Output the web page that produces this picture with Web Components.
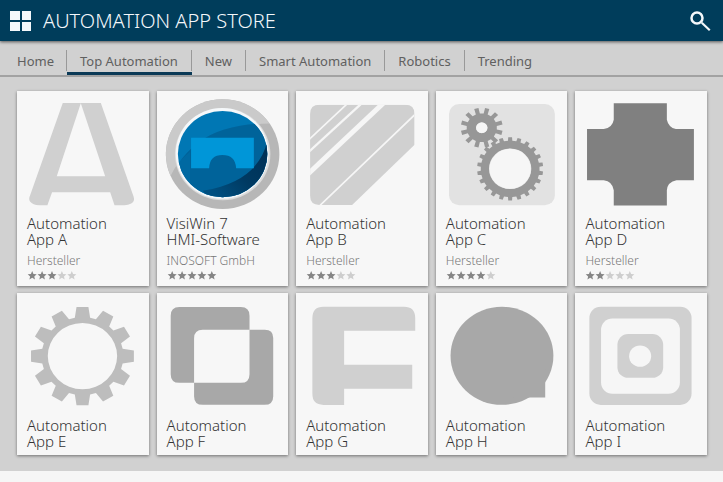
<!DOCTYPE html>
<html lang="en">
<head>
<meta charset="utf-8">
<title>Automation App Store</title>
<style>
  html { background: #f6f6f6; }
  body { margin: 0; font-family: "Noto Sans", "Open Sans", sans-serif; font-weight: 300; color: #333; }
</style>
</head>
<body>
<app-store></app-store>

<script>
/* Outline of a cog: elliptical radii, tapered teeth, and a round hole. */
function gear({ cx, cy, rx, ry, root, hole, teeth, phase = 0, tip, base }) {
  const step = Math.PI * 2 / teeth;
  const pts = [];
  for (let i = 0; i < teeth; i++) {
    const a = (i + phase) * step - Math.PI / 2;
    [[-base, root], [-tip, 1], [tip, 1], [base, root]].forEach(([o, r]) => {
      const t = a + o * step;
      pts.push((cx + Math.cos(t) * rx * r).toFixed(1) + ' ' + (cy + Math.sin(t) * ry * r).toFixed(1));
    });
  }
  const hx = rx * hole, hy = ry * hole;
  return `<path fill-rule="evenodd" d="M${pts.join('L')}Z M${cx - hx} ${cy}a${hx} ${hy} 0 1 0 ${2 * hx} 0a${hx} ${hy} 0 1 0 ${-2 * hx} 0Z"/>`;
}

const ICONS = {
  a: ['51 18', `<path fill="#d0d0d0" d="M188 54H302L400 334Q405 349 393 355Q382 361 369 360H343L330 321H156L142 360H118Q98 360 90 349Q85 342 90 331ZM242 55L170 273H315Z"/>`],
  visiwin: ['21 18', `
    <clipPath id="ring"><ellipse cx="217.500" cy="207" rx="170" ry="164"/></clipPath>
    <clipPath id="disc"><ellipse cx="217.500" cy="207" rx="134" ry="129"/></clipPath>
    <linearGradient id="dark" gradientUnits="userSpaceOnUse" x1="190" y1="320" x2="340" y2="200"><stop offset="0" stop-color="#004f80"/><stop offset="0.500" stop-color="#003a62"/><stop offset="1" stop-color="#003258"/></linearGradient>
    <g clip-path="url(#ring)">
      <rect x="40" y="40" width="360" height="340" fill="#b7b7b7"/>
      <path fill="#cacaca" d="M40 40H400V118Q310 105 200 150Q100 190 62 272L40 300Z"/>
    </g>
    <ellipse cx="217.500" cy="207" rx="143" ry="138" fill="#dcdcdc"/>
    <ellipse cx="216" cy="205" rx="139" ry="136" fill="#f5f8fa"/>
    <g clip-path="url(#disc)">
      <rect x="80" y="70" width="280" height="270" fill="#0077b4"/>
      <path fill="#00639a" d="M80 242Q135 160 220 134Q290 112 352 118V350H80Z"/>
      <path fill="#0074b0" d="M80 236L120 200V320H200Q120 330 80 280Z" opacity=".4"/>
      <path fill="url(#dark)" d="M352 165Q325 290 158 317Q180 350 230 350H370V165Z"/>
    </g>
    <path fill="#0096d8" d="M123 158H311V249H258Q255 210 217 210Q179 210 177 249H123Z"/>`],
  b: ['18 18', `
    <clipPath id="cut"><path d="M88 59H345Q373 59 373 87V179L186 359H88Q60 359 60 331V87Q60 59 88 59Z"/></clipPath>
    <g clip-path="url(#cut)">
      <rect x="55" y="55" width="322" height="310" fill="#d0d0d0"/>
      <g stroke="#f6f6f6" fill="none"><path stroke-width="5" d="M50 170L178 50M80 370L383 80"/><path stroke-width="7" d="M50 206L220 50"/><path stroke-width="15" d="M46 274L284 50"/></g>
    </g>`],
  c: ['18 18', `<rect x="57" y="57" width="317" height="303" rx="30" fill="#e2e2e2"/><g fill="#979797">
    ${gear({ cx: 155, cy: 128, rx: 63, ry: 60, root: .72, hole: .27, teeth: 12, phase: .5, tip: .2, base: .26 })}
    ${gear({ cx: 240, cy: 251, rx: 99, ry: 95, root: .89, hole: .64, teeth: 22, tip: .2, base: .26 })}</g>
    <ellipse cx="240" cy="251" rx="62" ry="60" fill="#f6f6f6"/><ellipse cx="155" cy="128" rx="17" ry="16" fill="#f6f6f6"/>`],
  d: ['18 18', `<path fill="#808080" d="M134 55H293V104Q298 127 320 132H374V285H322Q295 290 293 315V361H134V315Q130 288 104 285H54V132H104Q130 128 134 104Z"/>`],
  e: ['51 22', `<g fill="#bdbdbd">${gear({ cx: 247, cy: 211, rx: 155, ry: 148, root: .79, hole: .67, teeth: 12, tip: .22, base: .36 })}</g>`],
  f: ['21 22', `<path fill="#a8a8a8" fill-rule="evenodd" d="M88 64H272Q298 64 298 90V132H344Q369 132 369 157V331Q369 357 343 357H158Q132 357 132 331V291H88Q62 291 62 265V90Q62 64 88 64ZM158 132Q132 132 132 158V291H272Q298 291 298 265V132Z"/>`],
  g: ['18 22', `<path fill="#d0d0d0" d="M100 63H341Q375 63 375 97V135H162V237H366V309H162V357H100Q67 357 67 324V97Q67 63 100 63Z"/>`],
  h: ['18 22', `<g fill="#a8a8a8"><ellipse cx="215.500" cy="210" rx="154" ry="147"/><path d="M250 250H345V335H250Z"/></g>`],
  i: ['18 22', `<g fill="#d0d0d0"><rect x="61" y="63" width="306" height="294" rx="34"/><rect x="96" y="98" width="236" height="226" rx="34" fill="#f6f6f6"/><rect x="145" y="145" width="137" height="131" rx="32"/><ellipse cx="213" cy="211" rx="33" ry="32" fill="#f6f6f6"/></g>`]
};

class StoreHeader extends HTMLElement {
  connectedCallback() {
    this.attachShadow({ mode: 'open' }).innerHTML = `
      <style>
        :host { display: block; position: relative; background: #003d5b; color: #f4f8fb; box-shadow: 0 1px 3px #0009; }
        header { display: flex; align-items: center; min-height: 41px; padding: 0 8px 0 5px; gap: 7px; }
        button { display: flex; padding: 4px; border: 0; background: none; color: inherit; }
        svg { display: block; fill: currentColor; }
        h1 { flex: 1; margin: 0; font-size: 20px; line-height: 28px; font-weight: 300; white-space: nowrap; }
      </style>
      <header>
        <button aria-label="All apps"><svg width="23" height="22" viewBox="0 0 23 22"><path d="M1 1H11V10H1ZM13 1H22V10H13ZM1 12H11V21H1ZM13 12H22V21H13Z"/></svg></button>
        <h1><slot></slot></h1>
        <button aria-label="Search"><svg width="22" height="22" viewBox="0 0 22 22"><circle cx="8" cy="8" r="5.500" fill="none" stroke="currentColor" stroke-width="2.500"/><path d="M12 13.500L13.500 12L21.500 19.500L20 21Z"/></svg></button>
      </header>`;
  }
}

class StoreTab extends HTMLElement {
  connectedCallback() {
    this.attachShadow({ mode: 'open' }).innerHTML = `
      <style>
        :host { display: flex; box-sizing: border-box; padding-top: 9px; border-bottom: 3px solid transparent; }
        :host([active]) { border-color: #0b3a57; }
        a { display: block; height: 21px; padding: 0 13px; border-right: 1px solid #999; color: #606060; text-decoration: none; font-size: 13px; font-weight: 400; line-height: 22px; white-space: nowrap; }
        :host(:first-child) a { padding-left: 17px; padding-right: 12px; }
        :host(:last-child) a { border: 0; }
      </style>
      <a href="#"><slot></slot></a>`;
  }
}

class StoreTabs extends HTMLElement {
  connectedCallback() {
    this.attachShadow({ mode: 'open' }).innerHTML = `
      <style>
        :host { display: block; border-bottom: 2px solid #a2a2a2; }
        nav { display: flex; min-height: 34px; }
      </style>
      <nav><slot></slot></nav>`;
  }
}

class StarRating extends HTMLElement {
  connectedCallback() {
    const value = Number(this.getAttribute('value'));
    const star = 'M5 0L6.400 3.300L10 3.600L7.300 6L8.100 9.500L5 7.600L1.900 9.500L2.700 6L0 3.600L3.600 3.300Z';
    const stars = [0, 1, 2, 3, 4].map(i => `<path transform="translate(${i * 11})" fill="${i < value ? '#858585' : '#cecece'}" d="${star}"/>`).join('');
    this.attachShadow({ mode: 'open' }).innerHTML = `
      <style>:host { display: block; } svg { display: block; }</style>
      <svg width="50" height="9" viewBox="0 0 54 10" role="img" aria-label="${value} of 5 stars">${stars}</svg>`;
  }
}

class AppCard extends HTMLElement {
  connectedCallback() {
    const [origin, art] = ICONS[this.getAttribute('icon')];
    const vendor = this.getAttribute('vendor');
    this.attachShadow({ mode: 'open' }).innerHTML = `
      <style>
        :host { display: block; background: #f7f7f7; box-shadow: 0 1px 3px #0007; }
        svg { display: block; width: 100%; }
        .text { padding: 6px 4px 6px 10px; }
        h2 { margin: 0; font-size: 15px; line-height: 16px; font-weight: 300; }
        p { margin: 6px 0 0; font-size: 12px; line-height: 16px; color: #777; white-space: nowrap; }
        star-rating { margin: 2px 0 0; }
      </style>
      <svg viewBox="${origin} 394 354" aria-hidden="true">${art}</svg>
      <div class="text">
        <h2><slot></slot></h2>
        ${vendor ? `<p>${vendor}</p><star-rating value="${this.getAttribute('rating')}"></star-rating>` : ''}
      </div>`;
  }
}

class AppStore extends HTMLElement {
  connectedCallback() {
    this.attachShadow({ mode: 'open' }).innerHTML = `
      <style>
        :host { display: block; background: #d1d1d1; }
        main { display: grid; grid-template-columns: repeat(5, 1fr); gap: 7px 8px; padding: 14px 16px 16px 17px; }
      </style>
      <store-header>AUTOMATION APP STORE</store-header>
      <store-tabs>
        <store-tab>Home</store-tab><store-tab active>Top Automation</store-tab><store-tab>New</store-tab><store-tab>Smart Automation</store-tab><store-tab>Robotics</store-tab><store-tab>Trending</store-tab>
      </store-tabs>
      <main>
        <app-card icon="a" vendor="Hersteller" rating="3">Automation<br>App A</app-card>
        <app-card icon="visiwin" vendor="INOSOFT GmbH" rating="5">VisiWin 7<br>HMI-Software</app-card>
        <app-card icon="b" vendor="Hersteller" rating="3">Automation<br>App B</app-card>
        <app-card icon="c" vendor="Hersteller" rating="4">Automation<br>App C</app-card>
        <app-card icon="d" vendor="Hersteller" rating="2">Automation<br>App D</app-card>
        <app-card icon="e">Automation<br>App E</app-card>
        <app-card icon="f">Automation<br>App F</app-card>
        <app-card icon="g">Automation<br>App G</app-card>
        <app-card icon="h">Automation<br>App H</app-card>
        <app-card icon="i">Automation<br>App I</app-card>
      </main>`;
  }
}

customElements.define('star-rating', StarRating);
customElements.define('store-header', StoreHeader);
customElements.define('store-tab', StoreTab);
customElements.define('store-tabs', StoreTabs);
customElements.define('app-card', AppCard);
customElements.define('app-store', AppStore);
</script>
</body>
</html>
